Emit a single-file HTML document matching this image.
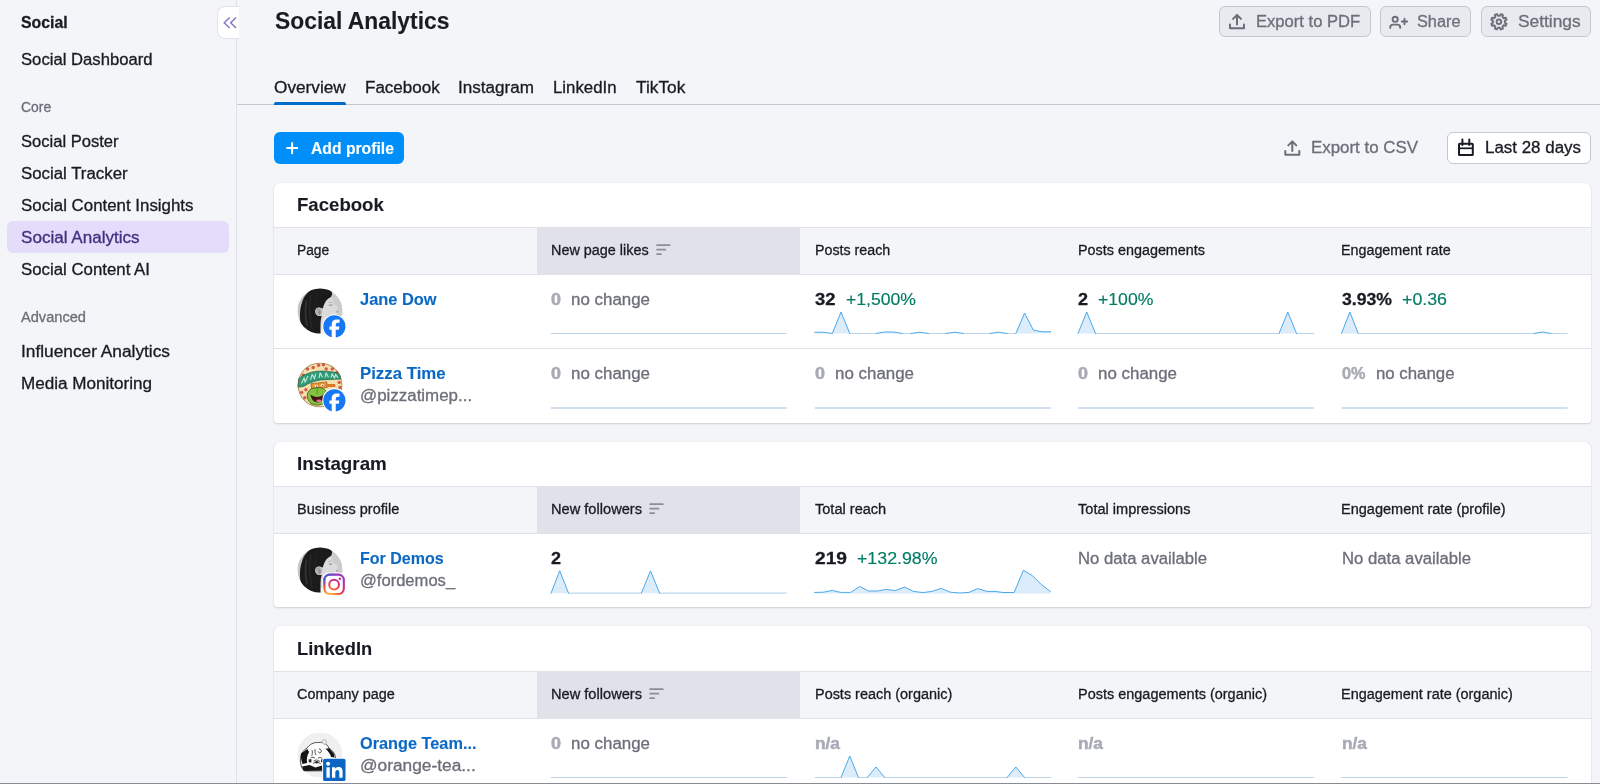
<!DOCTYPE html>
<html><head><meta charset="utf-8"><title>Social Analytics</title>
<style>
*{box-sizing:border-box;margin:0;padding:0}
html,body{width:1600px;height:784px;overflow:hidden;background:#f4f5f9;font-family:"Liberation Sans",sans-serif;}
body{position:relative}
.t{position:absolute;white-space:nowrap;line-height:1;transform-origin:0 50%;-webkit-text-stroke:0.3px currentColor;}
.abs{position:absolute}
.sbline{position:absolute;left:236px;top:0;width:1px;height:784px;background:#e0e1e9}
.collapse{position:absolute;left:216.6px;top:5.6px;width:22px;height:33.8px;background:#fff;border:1px solid #e2e3ea;border-right:none;border-radius:8px 0 0 8px}
.hl{position:absolute;left:7px;top:221px;width:222px;height:32px;border-radius:6px;background:#e3dcfb}
.tbtn{position:absolute;top:5.7px;height:31.8px;border:1px solid #c4c7cf;border-radius:6px;background:#e9eaef}
.tabline{position:absolute;left:237px;top:104px;width:1363px;height:1px;background:#c4c7cf}
.tabact{position:absolute;left:274px;top:101.6px;width:72px;height:3px;background:#006dca;border-radius:2px 2px 0 0}
.addbtn{position:absolute;left:274px;top:132px;width:130px;height:32px;border-radius:6px;background:#008ff8}
.datebtn{position:absolute;left:1447px;top:132px;width:144px;height:32px;border-radius:6px;background:#fff;border:1px solid #c4c7cf}
.card{position:absolute;left:274.2px;width:1316.8px;background:#fff;border-radius:6px 6px 3px 3px;box-shadow:0 0 1px rgba(25,27,35,.14),0 1px 2px rgba(25,27,35,.16);overflow:hidden}
.thead{position:absolute;left:0;width:1317px;height:48px;background:#f4f5f9;border-top:1px solid #e0e1e9;border-bottom:1px solid #e0e1e9}
.sorted{position:absolute;left:263.2px;top:-1px;width:263.1px;height:47px;background:#e0e1e9}
.rowline{position:absolute;left:0;width:1317px;height:1px;background:#e0e1e9}
.bottomline{position:absolute;left:0;top:783px;width:1600px;height:1px;background:#8a8c94}
svg{position:absolute;overflow:visible}
.txt{position:absolute;left:0;top:0;width:1600px;height:784px;will-change:transform}

</style></head>
<body>
<div class="sbline"></div>
<div class="hl"></div>
<div class="collapse"></div>
<div class="tbtn" style="left:1219px;width:152px"></div>
<div class="tbtn" style="left:1380.3px;width:91px"></div>
<div class="tbtn" style="left:1480.6px;width:110.4px"></div>
<div class="tabline"></div><div class="tabact"></div><div class="addbtn"></div><div class="datebtn"></div>
<div class="card" style="top:182.5px;height:240px">
  <div class="thead" style="top:44.5px"><div class="sorted"></div></div>
  <div class="rowline" style="top:165.7px"></div>
</div>
<div class="card" style="top:441.5px;height:165.8px">
  <div class="thead" style="top:44.5px"><div class="sorted"></div></div>
</div>
<div class="card" style="top:626.2px;height:200px">
  <div class="thead" style="top:44.8px"><div class="sorted"></div></div>
</div>
<svg class="full" width="1600" height="784" viewBox="0 0 1600 784" style="left:0;top:0;"><path d="M229.2 18 L224.2 22.75 L229.2 27.5 M235.6 18 L230.6 22.75 L235.6 27.5" fill="none" stroke="#8a7ecb" stroke-width="1.7" stroke-linecap="round" stroke-linejoin="round"/><g transform="translate(0,0)" fill="none" stroke="#6c6e79" stroke-width="2" stroke-linecap="round" stroke-linejoin="round"><path d="M1230 24.5 V28.3 H1244 V24.5"/><path d="M1237 24.6 V15.2 M1233 18.9 L1237 14.9 L1241 18.9"/></g><g transform="translate(55.3,126.5)" fill="none" stroke="#6c6e79" stroke-width="2" stroke-linecap="round" stroke-linejoin="round"><path d="M1230 24.5 V28.3 H1244 V24.5"/><path d="M1237 24.6 V15.2 M1233 18.9 L1237 14.9 L1241 18.9"/></g><g fill="none" stroke="#6c6e79" stroke-width="1.9" stroke-linecap="round"><circle cx="1395.2" cy="19.3" r="2.6"/><path d="M1390.2 27.9 V27.4 A2.8 2.8 0 0 1 1393 24.6 H1397.4 A2.8 2.8 0 0 1 1400.2 27.4 V27.9"/><path d="M1401.8 21.5 H1407.2 M1404.5 18.8 V24.2"/></g><g fill="none" stroke="#6c6e79" stroke-width="1.9" stroke-linejoin="round"><path d="M1504.73 20.35 L1506.72 20.64 L1506.72 22.86 L1504.73 23.15 L1504.02 24.88 L1505.22 26.49 L1503.64 28.07 L1502.03 26.87 L1500.30 27.58 L1500.01 29.57 L1497.79 29.57 L1497.50 27.58 L1495.77 26.87 L1494.16 28.07 L1492.58 26.49 L1493.78 24.88 L1493.07 23.15 L1491.08 22.86 L1491.08 20.64 L1493.07 20.35 L1493.78 18.62 L1492.58 17.01 L1494.16 15.43 L1495.77 16.63 L1497.50 15.92 L1497.79 13.93 L1500.01 13.93 L1500.30 15.92 L1502.03 16.63 L1503.64 15.43 L1505.22 17.01 L1504.02 18.62 Z" transform="rotate(22.5 1498.9 21.75)"/><circle cx="1498.9" cy="21.75" r="2.3"/></g><path d="M287 148.1 H297.2 M292.1 143 V153.2" stroke="#fff" stroke-width="2" stroke-linecap="round" fill="none"/><g fill="none" stroke="#191b23" stroke-width="2" stroke-linejoin="round"><rect x="1459" y="143.8" width="13.8" height="11.2" rx="0.6"/><path d="M1459 148.3 H1472.8" stroke-width="1.7"/><path d="M1462.4 139.6 V145 M1469.3 139.6 V145" stroke-linecap="round"/></g><path d="M657.1 245.2 H669.7 M657.1 249.7 H665.3000000000001 M657.1 254.2 H661.0" stroke="#8a8e9b" stroke-width="1.8" stroke-linecap="round" fill="none"/><path d="M650.2 504.2 H662.8000000000001 M650.2 508.7 H658.4000000000001 M650.2 513.2 H654.1" stroke="#8a8e9b" stroke-width="1.8" stroke-linecap="round" fill="none"/><path d="M650.2 689.2 H662.8000000000001 M650.2 693.7 H658.4000000000001 M650.2 698.2 H654.1" stroke="#8a8e9b" stroke-width="1.8" stroke-linecap="round" fill="none"/><rect x="550.80" y="333" width="236.00" height="1" fill="#bfd3e8"/><polygon points="814.80,333.5 814.80,332.21 823.54,332.21 832.28,333.50 841.02,312.00 849.76,333.50 858.50,333.50 867.24,333.50 875.99,333.50 884.73,332.00 893.47,332.00 902.21,333.50 910.95,333.50 919.69,332.21 928.43,333.50 937.17,333.50 945.91,333.50 954.65,332.21 963.39,333.50 972.13,333.50 980.87,333.50 989.61,333.50 998.36,332.21 1007.10,333.50 1015.84,333.50 1024.58,313.07 1033.32,330.06 1042.06,331.78 1050.80,331.78 1050.80,333.5" fill="#dcecfa"/><rect x="849.76" y="333" width="26.22" height="1" fill="#bfd3e8"/><rect x="902.21" y="333" width="8.74" height="1" fill="#bfd3e8"/><rect x="928.43" y="333" width="17.48" height="1" fill="#bfd3e8"/><rect x="963.39" y="333" width="26.22" height="1" fill="#bfd3e8"/><rect x="1007.10" y="333" width="8.74" height="1" fill="#bfd3e8"/><path d="M814.80 332.21L823.54 332.21L832.28 333.50L841.02 312.00L849.76 333.50M875.99 333.50L884.73 332.00L893.47 332.00L902.21 333.50M910.95 333.50L919.69 332.21L928.43 333.50M945.91 333.50L954.65 332.21L963.39 333.50M989.61 333.50L998.36 332.21L1007.10 333.50M1015.84 333.50L1024.58 313.07L1033.32 330.06L1042.06 331.78L1050.80 331.78" fill="none" stroke="#40a4ea" stroke-width="0.95" stroke-linejoin="round" stroke-linecap="round"/><polygon points="1078.00,333.5 1078.00,333.50 1086.74,312.00 1095.48,333.50 1104.22,333.50 1112.96,333.50 1121.70,333.50 1130.44,333.50 1139.19,333.50 1147.93,333.50 1156.67,333.50 1165.41,333.50 1174.15,333.50 1182.89,333.50 1191.63,333.50 1200.37,333.50 1209.11,333.50 1217.85,333.50 1226.59,333.50 1235.33,333.50 1244.07,333.50 1252.81,333.50 1261.56,333.50 1270.30,333.50 1279.04,333.50 1287.78,312.00 1296.52,333.50 1305.26,333.50 1314.00,333.50 1314.00,333.5" fill="#dcecfa"/><rect x="1095.48" y="333" width="183.56" height="1" fill="#bfd3e8"/><rect x="1296.52" y="333" width="17.48" height="1" fill="#bfd3e8"/><path d="M1078.00 333.50L1086.74 312.00L1095.48 333.50M1279.04 333.50L1287.78 312.00L1296.52 333.50" fill="none" stroke="#40a4ea" stroke-width="0.95" stroke-linejoin="round" stroke-linecap="round"/><polygon points="1341.50,333.5 1341.50,333.50 1349.87,312.00 1358.24,333.50 1366.61,333.50 1374.98,333.50 1383.35,333.50 1391.72,333.50 1400.09,333.50 1408.46,333.50 1416.83,333.50 1425.20,333.50 1433.57,333.50 1441.94,333.50 1450.31,333.50 1458.69,333.50 1467.06,333.50 1475.43,333.50 1483.80,333.50 1492.17,333.50 1500.54,333.50 1508.91,333.50 1517.28,333.50 1525.65,333.50 1534.02,333.50 1542.39,332.00 1550.76,333.50 1559.13,333.50 1567.50,333.50 1567.50,333.5" fill="#dcecfa"/><rect x="1358.24" y="333" width="175.78" height="1" fill="#bfd3e8"/><rect x="1550.76" y="333" width="16.74" height="1" fill="#bfd3e8"/><path d="M1341.50 333.50L1349.87 312.00L1358.24 333.50M1534.02 333.50L1542.39 332.00L1550.76 333.50" fill="none" stroke="#40a4ea" stroke-width="0.95" stroke-linejoin="round" stroke-linecap="round"/><rect x="550.80" y="407" width="236.00" height="2" fill="#d2dff0"/><rect x="814.80" y="407" width="236.00" height="2" fill="#d2dff0"/><rect x="1078.00" y="407" width="236.00" height="2" fill="#d2dff0"/><rect x="1341.50" y="407" width="226.00" height="2" fill="#d2dff0"/><polygon points="551.00,593.3 551.00,593.30 559.70,570.80 568.60,593.30 641.30,593.30 650.50,570.80 659.70,593.30 786.80,593.30 786.80,593.3" fill="#dcecfa"/><rect x="568.60" y="592" width="72.70" height="1" fill="#dceefd"/><rect x="568.60" y="593" width="72.70" height="1" fill="#cee1f1"/><rect x="659.70" y="592" width="127.10" height="1" fill="#dceefd"/><rect x="659.70" y="593" width="127.10" height="1" fill="#cee1f1"/><path d="M551.00 593.30L559.70 570.80L568.60 593.30M641.30 593.30L650.50 570.80L659.70 593.30" fill="none" stroke="#40a4ea" stroke-width="0.95" stroke-linejoin="round" stroke-linecap="round"/><polygon points="814.60,593.4 814.60,592.40 823.40,592.20 832.30,590.40 840.50,592.40 850.60,592.40 859.60,586.50 868.50,591.00 877.40,591.00 886.40,589.40 895.30,590.60 904.60,587.10 913.60,591.40 922.90,592.60 931.90,591.40 941.40,588.40 950.30,592.20 960.00,593.00 969.00,592.40 977.50,588.60 986.90,591.40 995.00,591.40 1003.10,592.50 1014.10,592.50 1023.40,570.30 1032.40,575.60 1041.30,584.50 1050.40,591.60 1050.40,593.4" fill="#dcecfa"/><path d="M814.60 592.40L823.40 592.20L832.30 590.40L840.50 592.40L850.60 592.40L859.60 586.50L868.50 591.00L877.40 591.00L886.40 589.40L895.30 590.60L904.60 587.10L913.60 591.40L922.90 592.60L931.90 591.40L941.40 588.40L950.30 592.20L960.00 593.00L969.00 592.40L977.50 588.60L986.90 591.40L995.00 591.40L1003.10 592.50L1014.10 592.50L1023.40 570.30L1032.40 575.60L1041.30 584.50L1050.40 591.60" fill="none" stroke="#40a4ea" stroke-width="0.95" stroke-linejoin="round" stroke-linecap="round"/><rect x="550.80" y="777" width="236.00" height="1" fill="#bfd3e6"/><polygon points="814.80,777.5 814.80,777.50 823.54,777.50 832.28,777.50 841.02,777.50 849.76,756.00 858.50,777.50 867.24,777.50 875.99,766.97 884.73,777.50 893.47,777.50 902.21,777.50 910.95,777.50 919.69,777.50 928.43,777.50 937.17,777.50 945.91,777.50 954.65,777.50 963.39,777.50 972.13,777.50 980.87,777.50 989.61,777.50 998.36,777.50 1007.10,777.50 1015.84,766.97 1024.58,777.50 1033.32,777.50 1042.06,777.50 1050.80,777.50 1050.80,777.5" fill="#dcecfa"/><rect x="814.80" y="777" width="26.22" height="1" fill="#bfd3e6"/><rect x="858.50" y="777" width="8.74" height="1" fill="#bfd3e6"/><rect x="884.73" y="777" width="122.37" height="1" fill="#bfd3e6"/><rect x="1024.58" y="777" width="26.22" height="1" fill="#bfd3e6"/><path d="M841.02 777.50L849.76 756.00L858.50 777.50M867.24 777.50L875.99 766.97L884.73 777.50M1007.10 777.50L1015.84 766.97L1024.58 777.50" fill="none" stroke="#40a4ea" stroke-width="0.95" stroke-linejoin="round" stroke-linecap="round"/><rect x="1078.00" y="777" width="236.00" height="1" fill="#bfd3e6"/><rect x="1341.50" y="777" width="226.00" height="1" fill="#bfd3e6"/></svg>
<svg class="full" width="1600" height="784" viewBox="0 0 1600 784" style="left:0;top:0">
<defs>
<clipPath id="a1c"><circle cx="22.5" cy="22.5" r="22.6"/></clipPath>
<clipPath id="a2c"><circle cx="22.5" cy="22.5" r="22.6"/></clipPath>
<clipPath id="a3c"><circle cx="22.5" cy="22.5" r="22.6"/></clipPath>
<clipPath id="a4c"><circle cx="22.5" cy="22.5" r="22.6"/></clipPath>
<linearGradient id="a1bg" x1="0" y1="0" x2="1" y2="0"><stop offset="0" stop-color="#c4c4c4"/><stop offset=".6" stop-color="#d0d0d0"/><stop offset="1" stop-color="#cacaca"/></linearGradient>
<linearGradient id="a3bg" x1="0" y1="0" x2="1" y2="0"><stop offset="0" stop-color="#c4c4c4"/><stop offset=".6" stop-color="#d0d0d0"/><stop offset="1" stop-color="#cacaca"/></linearGradient>
<radialGradient id="a3ig" gradientUnits="userSpaceOnUse" cx="329" cy="598" r="27"><stop offset="0" stop-color="#fed876"/><stop offset=".2" stop-color="#fba03c"/><stop offset=".45" stop-color="#f0483f"/><stop offset=".65" stop-color="#d62c7c"/><stop offset=".85" stop-color="#a034b8"/><stop offset="1" stop-color="#8a3abf"/></radialGradient>
<radialGradient id="a3ig2" gradientUnits="userSpaceOnUse" cx="322" cy="572" r="15"><stop offset="0" stop-color="#4a5fd6"/><stop offset=".5" stop-color="#4a5fd6" stop-opacity=".85"/><stop offset="1" stop-color="#4a5fd6" stop-opacity="0"/></radialGradient>
</defs>
<g transform="translate(297.5,288.5)"><g clip-path="url(#a1c)">
<rect width="45" height="45" fill="url(#a1bg)"/>
<path d="M27 12 L32.8 8.6 C34.2 10 35 11.4 35.3 12.8 C35.5 14.2 35.9 15 36.8 16 C38.2 17.2 40 18 40.9 18.9 C40.6 19.8 39.8 20.2 39.3 20.6 C39.9 21.6 40 22.2 39.6 23 C40 23.8 39.8 24.8 39 25.4 C38.8 26.6 37.6 27.4 35.4 27.2 C33 27.4 31 27.6 29.2 27.4 C28.4 29.4 28.2 31.4 28.6 34 L30 45 L20 45 L21 24 Z" fill="#dbdbdb"/>
<path d="M30 27.4 C32 27.8 34.4 27.6 36.4 27" stroke="#bdbdbd" stroke-width="0.9" fill="none"/>
<path d="M31.4 16.2 C32.4 17 33.8 17 34.8 16.3" stroke="#6d6d6d" stroke-width="0.85" fill="none"/>
<path d="M31 14.2 C32.2 13.6 33.6 13.6 34.6 14.2" stroke="#9a9a9a" stroke-width="0.6" fill="none"/>
<path d="M39.2 22.4 C39.7 22.9 39.8 23.5 39.4 24" stroke="#7d7d7d" stroke-width="1" fill="none"/>
<path d="M23 40 L27 41 L27.6 45.5 L22.6 45.5 Z" fill="#f0f0f0"/>
<path d="M33 1.5 C35 4 35.2 6.2 33 8.8 C30.6 10 28.8 11.6 27.6 14 C26.4 16 25.8 18 25.4 19.9 L23.6 19.4 C20 18.2 17.5 20 17.6 23 C17.8 26.2 20.4 28.2 24.2 27.3 C23.4 30 23 33 23 36 L23 45.5 L14 45.5 C9 43 4.4 38 2.8 32.8 C2 26 2.6 19 4.6 13.8 C6 8 10 3 16 0.5 C22 -1.2 29 -0.8 33 1.5 Z" fill="#1b1b1b"/>
<path d="M9 12 C7.6 20 7.6 29 9.6 37" stroke="#3c3c3c" stroke-width="1.8" fill="none" opacity=".75"/>
<path d="M13.4 7 C11.6 17 12 30 14.8 41" stroke="#303030" stroke-width="1.2" fill="none" opacity=".7"/>
<path d="M20 4 C17.6 12 17 18 17.4 22" stroke="#2c2c2c" stroke-width="1" fill="none" opacity=".6"/>
<ellipse cx="21.3" cy="23.3" rx="3.3" ry="4" fill="#b4b4b4"/>
<path d="M19.8 21 C22.2 21 23.4 23.6 21.8 26.2" stroke="#7c7c7c" stroke-width="0.8" fill="none"/>
<ellipse cx="21.6" cy="23.8" rx="1" ry="1.5" fill="#8e8e8e"/>
</g></g>
<g transform="translate(297.5,362.5)"><g clip-path="url(#a2c)">
<rect width="45" height="45" fill="#f2e0ad"/>
<circle cx="26.0" cy="2.3" r="1.7" fill="#d5594c"/><circle cx="15.7" cy="5.0" r="1.7" fill="#d5594c"/><circle cx="10.0" cy="6.5" r="1.7" fill="#d5594c"/><circle cx="28.7" cy="6.5" r="1.7" fill="#d5594c"/><circle cx="34.8" cy="6.5" r="1.7" fill="#d5594c"/><circle cx="39.4" cy="10.0" r="1.7" fill="#d5594c"/><circle cx="4.2" cy="29.9" r="1.7" fill="#d5594c"/><circle cx="7.3" cy="35.2" r="1.7" fill="#d5594c"/><circle cx="14.5" cy="40.2" r="1.7" fill="#d5594c"/><circle cx="41.7" cy="19.9" r="1.7" fill="#d5594c"/><circle cx="42.5" cy="24.9" r="1.7" fill="#d5594c"/><circle cx="8.4" cy="27.2" r="1.7" fill="#d5594c"/><circle cx="5.7" cy="12.6" r="1.7" fill="#d5594c"/><circle cx="37.5" cy="30.2" r="1.7" fill="#d5594c"/><circle cx="35.6" cy="2.3" r="1.7" fill="#d5594c"/><circle cx="21.1" cy="2.7" r="1.7" fill="#d5594c"/>
<path d="M0.2 24.8 L0.9 16.5 C4 13.6 7 12.2 9.8 11.2 C13 9.8 16 9.2 18.8 8.9 C22.4 8.5 26 8.5 29.5 8.9 C33.4 9.2 37 9.6 40.2 10.4 L42.6 12 L43.2 16.6 C39.6 16.6 36.4 16.8 33 17 C29.6 17 26.4 17.2 23.2 17.5 C20 18 17 18.6 14.3 19.7 C11.4 20.8 8.8 22.2 6.3 23.8 Z" fill="#2f9a78" stroke="#1f5e4a" stroke-width="0.7"/>
<path d="M4 21 L6.6 15.6 L7.6 19.4 L10.6 13.4 M13 17.4 L14.6 12 L17 16 L18.2 11.2 M21.6 15.4 L22.6 10.6 L25 14.6 M27.6 15 L28.6 10.6 L31 14.8 M33.6 15.2 L34.6 11.4 L37 15.4 L38.2 12 L40.4 15.4" stroke="#c9eadc" stroke-width="1.1" fill="none"/>
<path d="M13.4 21.2 L29.4 19.4 L29.8 25 L14 26.6 Z" fill="#ef8f2e" stroke="#6b3a12" stroke-width="0.5"/>
<path d="M29.6 21.6 L37.6 21.4 L38 24.4 L29.8 24.6 Z" fill="#d9772a"/>
<ellipse cx="18.8" cy="23.6" rx="1.7" ry="1.3" fill="#fff"/><ellipse cx="25" cy="22.8" rx="1.7" ry="1.3" fill="#fff"/>
<circle cx="19.2" cy="23.7" r=".65" fill="#222"/><circle cx="25.3" cy="22.9" r=".65" fill="#222"/>
<path d="M9.8 33.4 C9.8 27.8 14 25.4 19.6 25.2 C26 24.8 29.6 27.6 29.6 33.4 C29.6 39 25.6 42.6 19.8 42.6 C14.4 42.6 9.8 39 9.8 33.4 Z" fill="#84c33f" stroke="#2f5a1d" stroke-width="0.8"/>
<path d="M13 32 C16.6 35.2 22.4 35.4 26.6 31.8 C26.8 36.6 24 40 20.4 40 C16.4 40 13.4 36.4 13 32 Z" fill="#46131a"/>
<ellipse cx="21.4" cy="38.4" rx="2.6" ry="1.3" fill="#e6738c"/>
<path d="M19.6 25.4 L19.8 31.6" stroke="#2f5a1d" stroke-width="0.5"/>
<circle cx="22.5" cy="22.5" r="22" fill="none" stroke="#7a6038" stroke-width="0.9" opacity=".7"/>
</g></g>
<g transform="translate(297.5,547.5)"><g clip-path="url(#a3c)">
<rect width="45" height="45" fill="url(#a3bg)"/>
<path d="M27 12 L32.8 8.6 C34.2 10 35 11.4 35.3 12.8 C35.5 14.2 35.9 15 36.8 16 C38.2 17.2 40 18 40.9 18.9 C40.6 19.8 39.8 20.2 39.3 20.6 C39.9 21.6 40 22.2 39.6 23 C40 23.8 39.8 24.8 39 25.4 C38.8 26.6 37.6 27.4 35.4 27.2 C33 27.4 31 27.6 29.2 27.4 C28.4 29.4 28.2 31.4 28.6 34 L30 45 L20 45 L21 24 Z" fill="#dbdbdb"/>
<path d="M30 27.4 C32 27.8 34.4 27.6 36.4 27" stroke="#bdbdbd" stroke-width="0.9" fill="none"/>
<path d="M31.4 16.2 C32.4 17 33.8 17 34.8 16.3" stroke="#6d6d6d" stroke-width="0.85" fill="none"/>
<path d="M31 14.2 C32.2 13.6 33.6 13.6 34.6 14.2" stroke="#9a9a9a" stroke-width="0.6" fill="none"/>
<path d="M39.2 22.4 C39.7 22.9 39.8 23.5 39.4 24" stroke="#7d7d7d" stroke-width="1" fill="none"/>
<path d="M23 40 L27 41 L27.6 45.5 L22.6 45.5 Z" fill="#f0f0f0"/>
<path d="M33 1.5 C35 4 35.2 6.2 33 8.8 C30.6 10 28.8 11.6 27.6 14 C26.4 16 25.8 18 25.4 19.9 L23.6 19.4 C20 18.2 17.5 20 17.6 23 C17.8 26.2 20.4 28.2 24.2 27.3 C23.4 30 23 33 23 36 L23 45.5 L14 45.5 C9 43 4.4 38 2.8 32.8 C2 26 2.6 19 4.6 13.8 C6 8 10 3 16 0.5 C22 -1.2 29 -0.8 33 1.5 Z" fill="#1b1b1b"/>
<path d="M9 12 C7.6 20 7.6 29 9.6 37" stroke="#3c3c3c" stroke-width="1.8" fill="none" opacity=".75"/>
<path d="M13.4 7 C11.6 17 12 30 14.8 41" stroke="#303030" stroke-width="1.2" fill="none" opacity=".7"/>
<path d="M20 4 C17.6 12 17 18 17.4 22" stroke="#2c2c2c" stroke-width="1" fill="none" opacity=".6"/>
<ellipse cx="21.3" cy="23.3" rx="3.3" ry="4" fill="#b4b4b4"/>
<path d="M19.8 21 C22.2 21 23.4 23.6 21.8 26.2" stroke="#7c7c7c" stroke-width="0.8" fill="none"/>
<ellipse cx="21.6" cy="23.8" rx="1" ry="1.5" fill="#8e8e8e"/>
</g></g>
<g transform="translate(297.5,732.5)"><g clip-path="url(#a4c)">
<rect width="45" height="45" fill="#f0f0f0"/>
<path d="M3 25 C3.6 20 6.6 17.4 9.6 15.6 C12 12 16 9.6 21 10 C23.4 9.6 25.4 10 26.6 11 C28.6 11.4 30.4 13 31.4 15.6 C35 18 37.4 21 37.8 24 C38.6 28 37.4 33 35 36 L28 38.4 L6 38.4 C3.6 35 2.6 30 3 25 Z" fill="#fbfbfb" stroke="#2a2a2a" stroke-width="0.8"/>
<circle cx="26.8" cy="9.4" r="2.3" fill="#eaeaea" stroke="#9a9a9a" stroke-width="0.6"/>
<path d="M3.6 21 L9.8 16.6 L11.6 19.4 C9.6 22.6 9 26.4 9.6 30.4 L5 31.4 C3.6 28 3.2 24.4 3.6 21 Z" fill="#141414"/>
<path d="M28 16.2 L31.6 15.8 L36.6 21.6 L37 25 L33.6 24.4 C32.6 21 30.6 18.4 28 16.2 Z" fill="#141414"/>
<path d="M4.6 34 L12 32.6 L18 35 L24.6 33 L25 38 L5.6 38.4 Z" fill="#161616"/>
<path d="M14.6 17.6 C15 20 15 21.6 14.2 23.4 M17.6 16.6 C17.2 19.4 17.6 21 18.6 22.6 M21.4 16.4 C23.4 16.6 24.4 18 23.6 19.6 C22.4 21 21 20.4 20.8 19 M13 25.4 C14.6 24.4 16.6 24.6 17.6 26 M20.4 25.8 C21.8 24.6 24 24.8 25 26.2 M16 28.6 L19 27.4 L22.4 28.8 M15.4 31 C17.6 29.6 21 29.6 23.2 31.2" stroke="#4a4a4a" stroke-width="0.9" fill="none"/>
<path d="M11 27 L13.8 26.6 L14 29.8 L11.4 30 Z M23.6 26.8 L26.4 27.2 L26 30 L23.4 29.6 Z" fill="#2a2a2a"/>
<path d="M16.8 29.4 L19.2 28.6 L21.6 29.6 L19.2 31 Z" fill="#1a1a1a"/>
</g></g>
<circle cx="334.4" cy="326.4" r="12.1" fill="#fff"/><circle cx="334.4" cy="326.4" r="10.7" fill="#fff"/><path transform="translate(323.29999999999995,315.29999999999995) scale(0.9250)" d="M9.101 23.691v-7.98H6.627v-3.667h2.474v-1.58c0-4.085 1.848-5.978 5.858-5.978.401 0 .955.042 1.468.103a8.68 8.68 0 0 1 1.141.195v3.325a8.623 8.623 0 0 0-.653-.036 26.805 26.805 0 0 0-.733-.009c-.707 0-1.259.096-1.675.309a1.686 1.686 0 0 0-.679.622c-.258.42-.374.995-.374 1.752v1.297h3.919l-.386 2.103-.287 1.564h-3.246v8.245C19.396 23.238 24 18.179 24 12.044c0-6.627-5.373-12-12-12s-12 5.373-12 12c0 5.628 3.874 10.35 9.101 11.647Z" fill="#1877f2"/>
<circle cx="334.4" cy="400.4" r="12.1" fill="#fff"/><circle cx="334.4" cy="400.4" r="10.7" fill="#fff"/><path transform="translate(323.29999999999995,389.29999999999995) scale(0.9250)" d="M9.101 23.691v-7.98H6.627v-3.667h2.474v-1.58c0-4.085 1.848-5.978 5.858-5.978.401 0 .955.042 1.468.103a8.68 8.68 0 0 1 1.141.195v3.325a8.623 8.623 0 0 0-.653-.036 26.805 26.805 0 0 0-.733-.009c-.707 0-1.259.096-1.675.309a1.686 1.686 0 0 0-.679.622c-.258.42-.374.995-.374 1.752v1.297h3.919l-.386 2.103-.287 1.564h-3.246v8.245C19.396 23.238 24 18.179 24 12.044c0-6.627-5.373-12-12-12s-12 5.373-12 12c0 5.628 3.874 10.35 9.101 11.647Z" fill="#1877f2"/>
<rect x="322.3" y="572.4" width="23.6" height="23.8" rx="6.6" fill="#fff"/>
<rect x="324.40000000000003" y="574.6" width="19.4" height="19.4" rx="5.2" fill="none" stroke="url(#a3ig)" stroke-width="2.1"/>
<rect x="324.40000000000003" y="574.6" width="19.4" height="19.4" rx="5.2" fill="none" stroke="url(#a3ig2)" stroke-width="2.1"/>
<circle cx="334.1" cy="584.6" r="4.9" fill="none" stroke="url(#a3ig)" stroke-width="2"/>
<circle cx="339.90000000000003" cy="578.8" r="1.25" fill="#c13584"/>
<rect x="322.3" y="757.9000000000001" width="24" height="24" rx="2.4" fill="#fff"/>
<rect x="323.1" y="758.7" width="22.4" height="22.4" rx="1.6" fill="#0a66c2"/>
<circle cx="328.1" cy="763.8000000000001" r="1.95" fill="#fff"/>
<rect x="326.45000000000005" y="767.3000000000001" width="3.3" height="10.4" fill="#fff"/>
<path d="M332.0 767.3000000000001 H335.15000000000003 V768.75 C335.8 767.6500000000001 337.0 767.0500000000001 338.45000000000005 767.0500000000001 C341.6 767.0500000000001 342.6 769.0 342.6 771.9000000000001 V777.7 H339.3 V772.5 C339.3 770.9000000000001 338.85 769.9000000000001 337.55 769.9000000000001 C336.0 769.9000000000001 335.3 771.0 335.3 772.5 V777.7 H332.0 Z" fill="#fff"/>
</svg>
<div class="bottomline"></div>
<div class="txt">
<span class="t" style="left:21.0px;top:14.3px;font-size:16.5px;font-weight:700;color:#191b23;-webkit-text-stroke-width:.3px;transform:scaleX(0.9587);">Social</span>
<span class="t" style="left:21.0px;top:51.5px;font-size:16px;font-weight:400;color:#191b23;transform:scaleX(1.0412);">Social Dashboard</span>
<span class="t" style="left:21.0px;top:99.7px;font-size:14px;font-weight:400;color:#6c6e79;transform:scaleX(0.9948);">Core</span>
<span class="t" style="left:21.0px;top:133.9px;font-size:16px;font-weight:400;color:#191b23;transform:scaleX(1.0354);">Social Poster</span>
<span class="t" style="left:21.0px;top:165.9px;font-size:16px;font-weight:400;color:#191b23;transform:scaleX(1.0515);">Social Tracker</span>
<span class="t" style="left:21.0px;top:197.9px;font-size:16px;font-weight:400;color:#191b23;transform:scaleX(1.0540);">Social Content Insights</span>
<span class="t" style="left:21.0px;top:229.9px;font-size:16px;font-weight:400;color:#42307d;transform:scaleX(1.0668);">Social Analytics</span>
<span class="t" style="left:21.0px;top:261.9px;font-size:16px;font-weight:400;color:#191b23;transform:scaleX(1.0509);">Social Content AI</span>
<span class="t" style="left:21.0px;top:310.4px;font-size:14px;font-weight:400;color:#6c6e79;transform:scaleX(1.0437);">Advanced</span>
<span class="t" style="left:21.0px;top:343.9px;font-size:16px;font-weight:400;color:#191b23;transform:scaleX(1.0808);">Influencer Analytics</span>
<span class="t" style="left:21.0px;top:375.9px;font-size:16px;font-weight:400;color:#191b23;transform:scaleX(1.0682);">Media Monitoring</span>
<span class="t" style="left:274.6px;top:10.2px;font-size:23.5px;font-weight:700;color:#191b23;-webkit-text-stroke-width:.12px;transform:scaleX(0.9723);">Social Analytics</span>
<span class="t" style="left:1256.2px;top:13.5px;font-size:16px;font-weight:400;color:#6c6e79;transform:scaleX(1.0370);">Export to PDF</span>
<span class="t" style="left:1417.3px;top:13.5px;font-size:16px;font-weight:400;color:#6c6e79;transform:scaleX(1.0187);">Share</span>
<span class="t" style="left:1517.5px;top:13.5px;font-size:16px;font-weight:400;color:#6c6e79;transform:scaleX(1.0845);">Settings</span>
<span class="t" style="left:274.3px;top:80.3px;font-size:16px;font-weight:400;color:#191b23;transform:scaleX(1.0752);">Overview</span>
<span class="t" style="left:364.6px;top:80.3px;font-size:16px;font-weight:400;color:#191b23;transform:scaleX(1.0631);">Facebook</span>
<span class="t" style="left:458.0px;top:80.3px;font-size:16px;font-weight:400;color:#191b23;transform:scaleX(1.0683);">Instagram</span>
<span class="t" style="left:553.0px;top:80.3px;font-size:16px;font-weight:400;color:#191b23;transform:scaleX(1.0496);">LinkedIn</span>
<span class="t" style="left:635.5px;top:80.3px;font-size:16px;font-weight:400;color:#191b23;transform:scaleX(1.0802);">TikTok</span>
<span class="t" style="left:310.7px;top:140.3px;font-size:16.5px;font-weight:700;color:#ffffff;-webkit-text-stroke-width:.12px;transform:scaleX(0.9520);">Add profile</span>
<span class="t" style="left:1311.0px;top:139.5px;font-size:16px;font-weight:400;color:#6c6e79;transform:scaleX(1.0555);">Export to CSV</span>
<span class="t" style="left:1484.5px;top:139.5px;font-size:16px;font-weight:400;color:#191b23;transform:scaleX(1.0580);">Last 28 days</span>
<span class="t" style="left:296.8px;top:195.2px;font-size:19px;font-weight:700;color:#191b23;-webkit-text-stroke-width:.12px;transform:scaleX(0.9785);">Facebook</span>
<span class="t" style="left:296.8px;top:243.3px;font-size:14px;font-weight:400;color:#191b23;transform:scaleX(0.9846);">Page</span>
<span class="t" style="left:551.0px;top:243.3px;font-size:14px;font-weight:400;color:#191b23;transform:scaleX(1.0280);">New page likes</span>
<span class="t" style="left:814.8px;top:243.3px;font-size:14px;font-weight:400;color:#191b23;transform:scaleX(1.0171);">Posts reach</span>
<span class="t" style="left:1078.0px;top:243.3px;font-size:14px;font-weight:400;color:#191b23;transform:scaleX(1.0263);">Posts engagements</span>
<span class="t" style="left:1341.3px;top:243.3px;font-size:14px;font-weight:400;color:#191b23;transform:scaleX(1.0214);">Engagement rate</span>
<span class="t" style="left:296.8px;top:454.2px;font-size:19px;font-weight:700;color:#191b23;-webkit-text-stroke-width:.12px;transform:scaleX(0.9889);">Instagram</span>
<span class="t" style="left:296.8px;top:502.3px;font-size:14px;font-weight:400;color:#191b23;transform:scaleX(1.0341);">Business profile</span>
<span class="t" style="left:551.0px;top:502.3px;font-size:14px;font-weight:400;color:#191b23;transform:scaleX(1.0443);">New followers</span>
<span class="t" style="left:814.8px;top:502.3px;font-size:14px;font-weight:400;color:#191b23;transform:scaleX(1.0397);">Total reach</span>
<span class="t" style="left:1078.0px;top:502.3px;font-size:14px;font-weight:400;color:#191b23;transform:scaleX(1.0402);">Total impressions</span>
<span class="t" style="left:1341.3px;top:502.3px;font-size:14px;font-weight:400;color:#191b23;transform:scaleX(1.0374);">Engagement rate (profile)</span>
<span class="t" style="left:296.8px;top:639.2px;font-size:19px;font-weight:700;color:#191b23;-webkit-text-stroke-width:.12px;transform:scaleX(0.9626);">LinkedIn</span>
<span class="t" style="left:296.8px;top:687.3px;font-size:14px;font-weight:400;color:#191b23;transform:scaleX(1.0289);">Company page</span>
<span class="t" style="left:551.0px;top:687.3px;font-size:14px;font-weight:400;color:#191b23;transform:scaleX(1.0443);">New followers</span>
<span class="t" style="left:814.8px;top:687.3px;font-size:14px;font-weight:400;color:#191b23;transform:scaleX(1.0311);">Posts reach (organic)</span>
<span class="t" style="left:1078.0px;top:687.3px;font-size:14px;font-weight:400;color:#191b23;transform:scaleX(1.0335);">Posts engagements (organic)</span>
<span class="t" style="left:1341.3px;top:687.3px;font-size:14px;font-weight:400;color:#191b23;transform:scaleX(1.0309);">Engagement rate (organic)</span>
<span class="t" style="left:359.9px;top:291.0px;font-size:16.5px;font-weight:700;color:#0b69c4;-webkit-text-stroke-width:.12px;transform:scaleX(0.9944);">Jane Dow</span>
<span class="t" style="left:551.0px;top:291.0px;font-size:16.5px;font-weight:700;color:#a9abb6;-webkit-text-stroke-width:.5px;transform:scaleX(1.0884);">0</span>
<span class="t" style="left:571.0px;top:291.5px;font-size:16px;font-weight:400;color:#6c6e79;transform:scaleX(1.0571);">no change</span>
<span class="t" style="left:815.0px;top:291.0px;font-size:16.5px;font-weight:700;color:#191b23;-webkit-text-stroke-width:.3px;transform:scaleX(1.1166);">32</span>
<span class="t" style="left:846.0px;top:291.5px;font-size:16px;font-weight:400;color:#007c65;-webkit-text-stroke-width:.15px;transform:scaleX(1.1005);">+1,500%</span>
<span class="t" style="left:1078.0px;top:291.0px;font-size:16.5px;font-weight:700;color:#191b23;-webkit-text-stroke-width:.3px;transform:scaleX(1.0884);">2</span>
<span class="t" style="left:1097.8px;top:291.5px;font-size:16px;font-weight:400;color:#007c65;-webkit-text-stroke-width:.15px;transform:scaleX(1.1021);">+100%</span>
<span class="t" style="left:1341.5px;top:291.0px;font-size:16.5px;font-weight:700;color:#191b23;-webkit-text-stroke-width:.3px;transform:scaleX(1.0684);">3.93%</span>
<span class="t" style="left:1402.0px;top:291.5px;font-size:16px;font-weight:400;color:#007c65;-webkit-text-stroke-width:.15px;transform:scaleX(1.1115);">+0.36</span>
<span class="t" style="left:359.9px;top:365.0px;font-size:16.5px;font-weight:700;color:#0b69c4;-webkit-text-stroke-width:.12px;transform:scaleX(1.0181);">Pizza Time</span>
<span class="t" style="left:551.0px;top:365.0px;font-size:16.5px;font-weight:700;color:#a9abb6;-webkit-text-stroke-width:.5px;transform:scaleX(1.0884);">0</span>
<span class="t" style="left:571.0px;top:365.5px;font-size:16px;font-weight:400;color:#6c6e79;transform:scaleX(1.0571);">no change</span>
<span class="t" style="left:815.0px;top:365.0px;font-size:16.5px;font-weight:700;color:#a9abb6;-webkit-text-stroke-width:.5px;transform:scaleX(1.0884);">0</span>
<span class="t" style="left:834.5px;top:365.5px;font-size:16px;font-weight:400;color:#6c6e79;transform:scaleX(1.0571);">no change</span>
<span class="t" style="left:1078.0px;top:365.0px;font-size:16.5px;font-weight:700;color:#a9abb6;-webkit-text-stroke-width:.5px;transform:scaleX(1.0884);">0</span>
<span class="t" style="left:1098.0px;top:365.5px;font-size:16px;font-weight:400;color:#6c6e79;transform:scaleX(1.0571);">no change</span>
<span class="t" style="left:1341.5px;top:365.0px;font-size:16.5px;font-weight:700;color:#a9abb6;-webkit-text-stroke-width:.5px;transform:scaleX(0.9849);">0%</span>
<span class="t" style="left:1375.5px;top:365.5px;font-size:16px;font-weight:400;color:#6c6e79;transform:scaleX(1.0504);">no change</span>
<span class="t" style="left:359.9px;top:387.5px;font-size:16px;font-weight:400;color:#6c6e79;transform:scaleX(1.0569);">@pizzatimep...</span>
<span class="t" style="left:359.9px;top:550.0px;font-size:16.5px;font-weight:700;color:#0b69c4;-webkit-text-stroke-width:.12px;transform:scaleX(0.9700);">For Demos</span>
<span class="t" style="left:551.0px;top:550.0px;font-size:16.5px;font-weight:700;color:#191b23;-webkit-text-stroke-width:.3px;transform:scaleX(1.0884);">2</span>
<span class="t" style="left:815.0px;top:550.0px;font-size:16.5px;font-weight:700;color:#191b23;-webkit-text-stroke-width:.3px;transform:scaleX(1.1623);">219</span>
<span class="t" style="left:857.0px;top:550.5px;font-size:16px;font-weight:400;color:#007c65;-webkit-text-stroke-width:.15px;transform:scaleX(1.1101);">+132.98%</span>
<span class="t" style="left:1078.0px;top:550.5px;font-size:16px;font-weight:400;color:#6c6e79;transform:scaleX(1.0433);">No data available</span>
<span class="t" style="left:1341.5px;top:550.5px;font-size:16px;font-weight:400;color:#6c6e79;transform:scaleX(1.0433);">No data available</span>
<span class="t" style="left:359.9px;top:572.5px;font-size:16px;font-weight:400;color:#6c6e79;transform:scaleX(1.0355);">@fordemos_</span>
<span class="t" style="left:359.9px;top:735.0px;font-size:16.5px;font-weight:700;color:#0b69c4;-webkit-text-stroke-width:.12px;transform:scaleX(0.9874);">Orange Team...</span>
<span class="t" style="left:551.0px;top:735.0px;font-size:16.5px;font-weight:700;color:#a9abb6;-webkit-text-stroke-width:.5px;transform:scaleX(1.0884);">0</span>
<span class="t" style="left:571.0px;top:735.5px;font-size:16px;font-weight:400;color:#6c6e79;transform:scaleX(1.0571);">no change</span>
<span class="t" style="left:815.0px;top:735.0px;font-size:16.5px;font-weight:700;color:#a9abb6;-webkit-text-stroke-width:.5px;transform:scaleX(1.0485);">n/a</span>
<span class="t" style="left:1078.0px;top:735.0px;font-size:16.5px;font-weight:700;color:#a9abb6;-webkit-text-stroke-width:.5px;transform:scaleX(1.0485);">n/a</span>
<span class="t" style="left:1341.5px;top:735.0px;font-size:16.5px;font-weight:700;color:#a9abb6;-webkit-text-stroke-width:.5px;transform:scaleX(1.0485);">n/a</span>
<span class="t" style="left:359.9px;top:757.5px;font-size:16px;font-weight:400;color:#6c6e79;transform:scaleX(1.0816);">@orange-tea...</span>
</div>
</body></html>
